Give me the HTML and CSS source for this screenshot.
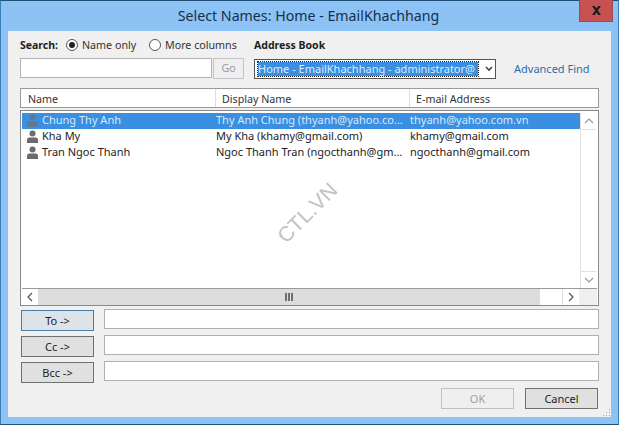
FILE: index.html
```html
<!DOCTYPE html>
<html lang="en">
<head>
<meta charset="utf-8">
<title>Select Names</title>
<link rel="stylesheet" href="styles.css">
</head>
<body>
<div class="window">
  <header class="titlebar">
    <div class="title">Select Names: Home - EmailKhachhang</div>
    <div class="close">
      <svg width="11" height="9" viewBox="0 0 11 9"><path d="M1 0h2.6L5.500 2.300 7.400 0H10L6.800 4.400 10 9H7.400L5.500 6.500 3.600 9H1L4.200 4.400z" fill="#1c1c1c"/></svg>
    </div>
  </header>
  <main class="client">
    <div class="top-labels">
      <span class="bold search-label">Search:</span>
      <label class="radio-item"><span class="radio checked"></span>Name only</label>
      <label class="radio-item second"><span class="radio"></span>More columns</label>
      <span class="bold book-label">Address Book</span>
    </div>
    <div class="top-controls">
      <div class="search-input"></div>
      <div class="go">Go</div>
      <div class="combo">
        <span class="combo-text">Home - EmailKhachhang - administrator@</span>
        <svg class="combo-arrow" width="8" height="6" viewBox="0 0 8 6"><path d="M1 1l3 3 3-3" fill="none" stroke="#444" stroke-width="1.600"/></svg>
      </div>
      <a class="advanced">Advanced Find</a>
    </div>
    <div class="header-row">
      <div class="hcell c1">Name</div>
      <div class="hcell c2">Display Name</div>
      <div class="hcell c3">E-mail Address</div>
    </div>
    <div class="listbox">
      <div class="list-main">
        <div class="rows">
          <div class="row selected">
            <svg class="person" width="13" height="14" viewBox="0 0 13 14"><circle cx="6.500" cy="3.500" r="3" fill="#5f7894"/><path d="M1 13V9.500Q1 7.500 3.500 7.500h6Q12 7.500 12 9.500V13z" fill="#5f7894"/></svg>
            <span class="c-name">Chung Thy Anh</span><span class="c-display">Thy Anh Chung (thyanh@yahoo.co...</span><span class="c-mail">thyanh@yahoo.com.vn</span>
          </div>
          <div class="row">
            <svg class="person" width="13" height="14" viewBox="0 0 13 14"><circle cx="6.500" cy="3.500" r="3" fill="#6b6b6b"/><path d="M1 13V9.500Q1 7.500 3.500 7.500h6Q12 7.500 12 9.500V13z" fill="#6b6b6b"/></svg>
            <span class="c-name">Kha My</span><span class="c-display">My Kha (khamy@gmail.com)</span><span class="c-mail">khamy@gmail.com</span>
          </div>
          <div class="row">
            <svg class="person" width="13" height="14" viewBox="0 0 13 14"><circle cx="6.500" cy="3.500" r="3" fill="#6b6b6b"/><path d="M1 13V9.500Q1 7.500 3.500 7.500h6Q12 7.500 12 9.500V13z" fill="#6b6b6b"/></svg>
            <span class="c-name">Tran Ngoc Thanh</span><span class="c-display">Ngoc Thanh Tran (ngocthanh@gm...</span><span class="c-mail">ngocthanh@gmail.com</span>
          </div>
        </div>
        <div class="vscroll">
          <div class="sbtn"><svg width="10" height="6" viewBox="0 0 10 6"><path d="M1 5l4-4 4 4" fill="none" stroke="#999" stroke-width="1.200"/></svg></div>
          <div class="sbtn"><svg width="10" height="6" viewBox="0 0 10 6"><path d="M1 1l4 4 4-4" fill="none" stroke="#999" stroke-width="1.200"/></svg></div>
        </div>
      </div>
      <div class="hscroll">
        <div class="hbtn"><svg width="6" height="10" viewBox="0 0 6 10"><path d="M5 1L1 5l4 4" fill="none" stroke="#555" stroke-width="1.200"/></svg></div>
        <div class="thumb"><svg width="9" height="8" viewBox="0 0 9 8"><path d="M1 0v8M4 0v8M7 0v8" stroke="#555" stroke-width="1.600"/></svg></div>
        <div class="track"></div>
        <div class="hbtn"><svg width="6" height="10" viewBox="0 0 6 10"><path d="M1 1l4 4-4 4" fill="none" stroke="#555" stroke-width="1.200"/></svg></div>
        <div class="corner"></div>
      </div>
    </div>
    <div class="recipients">
      <div class="recipient"><div class="btn focused">To -&gt;</div><div class="field"></div></div>
      <div class="recipient"><div class="btn">Cc -&gt;</div><div class="field"></div></div>
      <div class="recipient"><div class="btn">Bcc -&gt;</div><div class="field"></div></div>
    </div>
    <div class="actions">
      <div class="btn disabled">OK</div>
      <div class="btn">Cancel</div>
    </div>
    <div class="watermark">CTL.VN</div>
    <svg class="grip" width="8" height="8" viewBox="0 0 8 8"><path d="M6 0h1v1H6zM6 3h1v1H6zM3 3h1v1H3zM6 6h1v1H6zM3 6h1v1H3zM0 6h1v1H0z" fill="#a8a8a8"/></svg>
  </main>
</div>
</body>
</html>
```

FILE: styles.css
```css
* { box-sizing: border-box; }
html, body { margin: 0; padding: 0; }
body {
  width: 619px;
  height: 425px;
  overflow: hidden;
  font-family: "Noto Sans", "Open Sans", sans-serif;
  font-size: 10.700px;
  color: #222;
}
.window {
  width: 619px;
  height: 425px;
  display: flex;
  flex-direction: column;
  background: #8cc2f4;
  border: 1px solid #1f4f75;
  border-left-color: #3a7fb8;
  border-right-color: #3a7fb8;
  padding: 0 7px 7px;
}
.titlebar {
  height: 30px;
  flex: none;
  position: relative;
  display: flex;
  justify-content: center;
  align-items: center;
}
.title {
  font-size: 14.200px;
  color: #14304c;
  margin-top: -2px;
  margin-right: 2px;
}
.close {
  position: absolute;
  top: -1px;
  right: -2px;
  width: 34px;
  height: 22px;
  background: #c75050;
  border: 1px solid #9c4a4a;
  border-top: none;
  display: flex;
  align-items: center;
  justify-content: center;
}
.client {
  flex: 1;
  position: relative;
  background: #f0f0f0;
  padding: 6px 4px 0 12px;
  display: flex;
  flex-direction: column;
}
.bold { font-weight: 700; color: #1d1d1d; font-size: 10.500px; }
.top-labels {
  display: flex;
  align-items: center;
  height: 15px;
}
.search-label { width: 46px; }
.radio-item {
  display: flex;
  align-items: center;
  gap: 4px;
  color: #333;
  width: 83px;
}
.radio-item.second { width: 105px; }
.radio {
  width: 12px;
  height: 12px;
  border: 1px solid #555;
  border-radius: 50%;
  background: #fff;
  display: flex;
  align-items: center;
  justify-content: center;
  flex: none;
}
.radio.checked::after {
  content: "";
  width: 6px;
  height: 6px;
  border-radius: 50%;
  background: #222;
}
.top-controls {
  display: flex;
  align-items: flex-start;
  margin-top: 6px;
  height: 21px;
}
.search-input {
  width: 192px;
  height: 20px;
  background: #fff;
  border: 1px solid #b4b4b4;
}
.go {
  width: 31px;
  height: 21px;
  margin-left: 1px;
  border: 1px solid #c4c4c4;
  background: #efefef;
  color: #9a9a9a;
  text-align: center;
  line-height: 19px;
}
.combo {
  width: 242px;
  height: 20px;
  margin-left: 10px;
  margin-top: 1px;
  background: #fff;
  border: 1px solid #555;
  display: flex;
  align-items: center;
  padding-left: 3px;
}
.combo-text {
  background: #3b8fe0;
  color: #d8ecff;
  width: 220px;
  height: 14px;
  font-size: 11px;
  line-height: 13px;
  outline: 1px dotted #222;
  white-space: nowrap;
  overflow: hidden;
}
.combo-arrow { margin-left: 7px; }
.advanced {
  margin: 1px 0 0 18px;
  font-size: 11px;
  line-height: 20px;
  color: #2a6fa8;
  white-space: nowrap;
}
.header-row {
  display: flex;
  height: 20px;
  margin-top: 9px;
  width: 579px;
  flex: none;
  background: #fff;
  border: 1px solid #9a9a9a;
}
.hcell {
  line-height: 20px;
  padding-left: 7px;
  border-right: 1px solid #dedede;
  color: #333;
}
.hcell.c1 { width: 195px; }
.hcell.c2 { width: 194px; padding-left: 6px; }
.hcell.c3 { flex: 1; border-right: none; padding-left: 6px; }
.listbox {
  width: 579px;
  height: 196px;
  margin-top: 2px;
  flex: none;
  border: 1px solid #8a8a8a;
  background: #fff;
  display: flex;
  flex-direction: column;
  padding: 2px 1px 0;
}
.list-main {
  flex: 1;
  display: flex;
  min-height: 0;
}
.rows { width: 558px; flex: none; }
.row {
  height: 16px;
  display: flex;
  align-items: center;
  white-space: nowrap;
  color: #222;
  font-size: 11px;
}
.row span { line-height: 14px; margin-bottom: 2px; }
.row.selected { background: #3b8fe0; color: #d5eaff; }
.person { margin-left: 4px; margin-right: 3px; flex: none; }
.c-name { width: 174px; flex: none; }
.c-display { width: 194px; flex: none; }
.vscroll {
  flex: 1;
  display: flex;
  flex-direction: column;
  justify-content: space-between;
  background: #fff;
  border-left: 1px solid #e0e0e0;
  margin-right: 1px;
}
.sbtn {
  height: 17px;
  display: flex;
  align-items: center;
  justify-content: center;
  border-bottom: 1px solid #e0e0e0;
}
.sbtn:last-child { border-bottom: none; border-top: 1px solid #e0e0e0; }
.hscroll {
  height: 17px;
  flex: none;
  display: flex;
  border-top: 1px solid #9a9a9a;
}
.hbtn {
  width: 17px;
  display: flex;
  align-items: center;
  justify-content: center;
  background: #fff;
  border-right: 1px solid #ddd;
}
.hbtn:nth-child(4) { border-left: 1px solid #ddd; border-right: none; }
.thumb {
  width: 501px;
  flex: none;
  background: #dcdcdc;
  display: flex;
  align-items: center;
  justify-content: center;
}
.track { flex: 1; background: #fff; }
.corner { width: 18px; background: #f0f0f0; }
.recipients {
  display: flex;
  flex-direction: column;
  gap: 5px;
  margin-top: 3px;
}
.recipient {
  display: flex;
  align-items: flex-start;
  gap: 10px;
  height: 21px;
  padding-left: 1px;
}
.field {
  width: 495px;
  height: 20px;
  background: #fff;
  border: 1px solid #b0b0b0;
}
.btn {
  width: 73px;
  height: 21px;
  background: #e0e0e0;
  border: 1px solid #707070;
  text-align: center;
  line-height: 19px;
  font-size: 11px;
  color: #222;
  flex: none;
}
.recipient .btn { margin-top: 1px; }
.btn.focused { background: #dce4ea; border-color: #4a7ea8; }
.btn.disabled { background: #efefef; border-color: #c0c0c0; color: #a0a0a0; }
.actions {
  display: flex;
  justify-content: flex-end;
  gap: 11px;
  margin-top: 6px;
  padding-right: 9px;
}
.watermark {
  position: absolute;
  left: 262px;
  top: 170px;
  font-size: 21px;
  color: #c2c2c2;
  transform: rotate(-45deg);
  white-space: nowrap;
  font-family: "Liberation Sans", sans-serif;
}
.grip {
  position: absolute;
  right: 0;
  bottom: 0;
}
```
